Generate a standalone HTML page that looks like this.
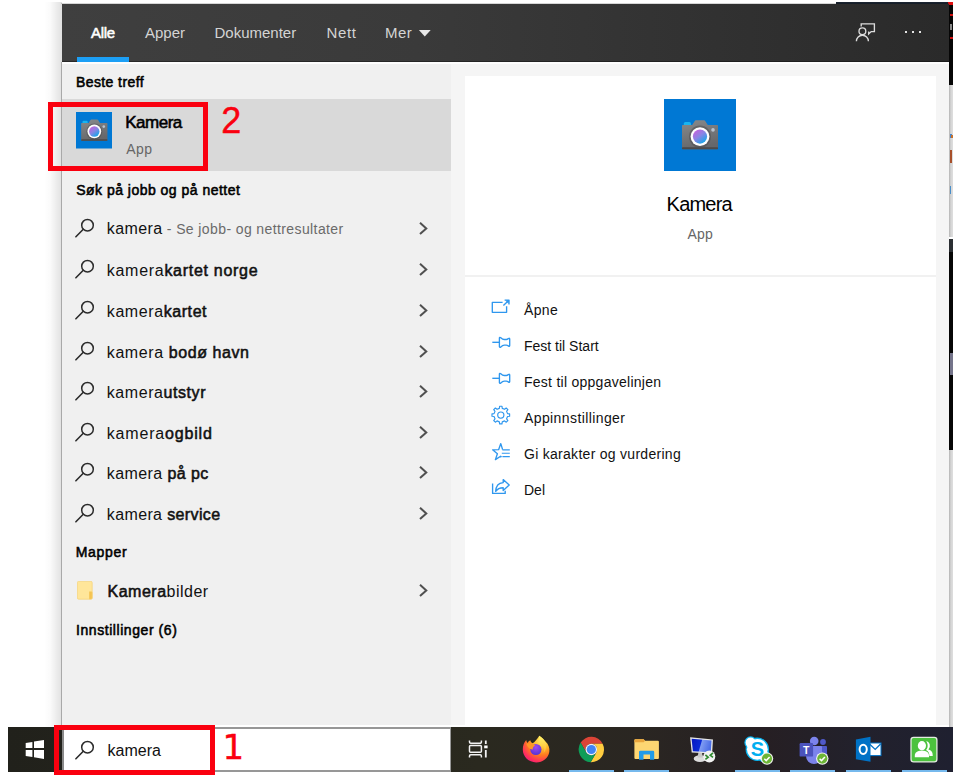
<!DOCTYPE html>
<html lang="nb"><head><meta charset="utf-8"><title>Søk – kamera</title>
<style>
html,body{margin:0;padding:0}
body{width:960px;height:780px;position:relative;overflow:hidden;background:#fff;font-family:"Liberation Sans",sans-serif}
div,svg{position:absolute}
.t{white-space:nowrap;margin:0;padding:0}
b{font-weight:400;-webkit-text-stroke:0.55px currentColor}
.g{color:#6a6a6a}
</style></head><body>
<div style="left:44px;top:2px;width:18px;height:725px;background:linear-gradient(to right,rgba(0,0,0,0),rgba(0,0,0,0.02) 35%,rgba(0,0,0,0.12))"></div>
<div style="left:836px;top:2px;width:117px;height:3px;background:#1b2430"></div>
<div style="left:949px;top:3px;width:4.3px;height:724px;background:linear-gradient(to right,#b4b4b4,#d6d6d6 50%,#dedede)"></div>
<div style="left:949px;top:3px;width:4.3px;height:82px;background:#060606"></div>
<div style="left:949px;top:237px;width:4.3px;height:2px;background:#fff"></div>
<div style="left:949px;top:239px;width:4.3px;height:13px;background:#2a2e32"></div>
<div style="left:949px;top:252px;width:4.3px;height:198px;background:#060606"></div>
<div style="left:949.6px;top:353px;width:3px;height:22px;background:#74748a"></div>
<div style="left:949.5px;top:134px;width:2px;height:4px;background:#4a86c8"></div>
<div style="left:950.6px;top:135px;width:2px;height:3px;background:#c8702a"></div>
<div style="left:949.8px;top:150px;width:2px;height:13px;background:#a8502a"></div>
<div style="left:949.5px;top:186px;width:1.6px;height:8px;background:#4a8ec8"></div>
<div style="left:950px;top:14px;width:3.3px;height:2.2px;background:#d01010"></div>
<div style="left:950px;top:37px;width:3.3px;height:2.2px;background:#d01010"></div>
<div style="left:949.6px;top:24px;width:2.4px;height:6px;background:#8a8a8a"></div>
<div style="left:948px;top:2px;width:5px;height:3px;background:#e01010"></div>
<div style="left:61px;top:2.6px;width:888px;height:1.4px;background:rgba(0,0,0,0.16)"></div>
<div style="left:62px;top:4px;width:887px;height:58px;background:linear-gradient(to right,#3f3f3f,#3a3a3a 40%,#2a2a2a)"></div>
<div style="left:62px;top:62px;width:389px;height:662.6px;background:#f0f0f0"></div>
<div style="left:61px;top:62px;width:1px;height:665px;background:#a9a9a9"></div>
<div style="left:451px;top:62px;width:498px;height:662.6px;background:#f5f5f5"></div>
<div style="left:464.5px;top:76.2px;width:471px;height:651px;background:#fff"></div>
<div style="left:62px;top:60.7px;width:887px;height:1.3px;background:rgba(0,0,0,0.35)"></div>
<div style="left:62px;top:62px;width:887px;height:1.5px;background:#fdfdfd"></div>
<div style="left:465px;top:275px;width:471px;height:2px;background:#f1f1f1"></div>
<div style="left:77px;top:57px;width:52px;height:5px;background:#1c9ff5"></div>
<div class="t" id="alle" style="left:91.00px;top:22.80px;font-size:15px;line-height:20px;color:#fff;font-weight:400;-webkit-text-stroke:0.55px currentColor;letter-spacing:-0.333px">Alle</div>
<div class="t" id="apper" style="left:145.00px;top:22.80px;font-size:15px;line-height:20px;color:#d4d4d4;font-weight:400;letter-spacing:0.000px">Apper</div>
<div class="t" id="dok" style="left:214.50px;top:22.80px;font-size:15px;line-height:20px;color:#d4d4d4;font-weight:400;letter-spacing:0.000px">Dokumenter</div>
<div class="t" id="nett" style="left:326.50px;top:22.80px;font-size:15px;line-height:20px;color:#d4d4d4;font-weight:400;letter-spacing:0.667px">Nett</div>
<div class="t" id="mer" style="left:385.00px;top:22.80px;font-size:15px;line-height:20px;color:#d4d4d4;font-weight:400;letter-spacing:0.500px">Mer</div>
<svg style="left:418px;top:28.6px" width="14" height="9" viewBox="0 0 14 9"><path d="M0.9 0.9h11.8L6.8 7.4z" fill="#e8e8e8"/></svg>
<svg style="left:853px;top:20px" width="26" height="24" viewBox="853 20 26 24" fill="none" stroke="#dcdcdc" stroke-width="1.35">
<path d="M861.2,26.6 V23.9 H874.4 V31.6 H871.2 L868.7,34 V31.6"/>
<circle cx="862.4" cy="31.3" r="3.4"/>
<path d="M856.4,41.2 a6,6 0 0 1 12,0"/>
</svg>
<div style="left:904.6px;top:31px;width:2.3px;height:2.3px;background:#e4e4e4"></div>
<div style="left:911.5px;top:31px;width:2.3px;height:2.3px;background:#e4e4e4"></div>
<div style="left:918.5px;top:31px;width:2.3px;height:2.3px;background:#e4e4e4"></div>

<div class="t" id="beste" style="left:76.00px;top:72.55px;font-size:14px;line-height:18px;color:#000;font-weight:400;-webkit-text-stroke:0.55px currentColor;letter-spacing:0.400px">Beste treff</div>
<div style="left:62px;top:99px;width:389px;height:72px;background:#d9d9d9"></div>
<svg style="left:75.5px;top:112.1px" width="36.5" height="36.5" viewBox="0 0 36.5 36.5"><rect width="36.5" height="36.5" fill="#0078d4"/><g transform="translate(18.3 18.3) scale(0.73)">
<defs><linearGradient id="cbb" x1="0" y1="0" x2="0.3" y2="1"><stop offset="0" stop-color="#888a8c"/><stop offset="1" stop-color="#66676a"/></linearGradient>
<linearGradient id="clb" x1="0.15" y1="0.1" x2="0.8" y2="0.95"><stop offset="0" stop-color="#c064dc"/><stop offset="0.45" stop-color="#8a84e4"/><stop offset="1" stop-color="#10a8ea"/></linearGradient></defs>
<rect x="-16.2" y="-13" width="7.2" height="5" rx="1.6" fill="#19b4f0"/>
<path d="M-18,-9.2 a0.9,0.9 0 0 1 0.9,-0.9 H-7.8 L-5.2,-14 a1.4,1.4 0 0 1 1.1,-0.7 H4.1 a1.4,1.4 0 0 1 1.1,0.7 L7.8,-10.1 H17.1 a0.9,0.9 0 0 1 0.9,0.9 V13.4 a0.8,0.8 0 0 1 -0.8,0.8 H-17.2 a0.8,0.8 0 0 1 -0.8,-0.8 Z" fill="url(#cbb)"/>
<rect x="-18" y="12.3" width="36" height="1.9" rx="0.6" fill="#4b4a4a"/>
<circle cx="0" cy="1.6" r="11" fill="#4e4f51" opacity="0.55"/>
<circle cx="0" cy="1.6" r="9.4" fill="#fdfdfd"/>
<circle cx="0" cy="1.6" r="7.1" fill="url(#clb)"/>
<circle cx="13" cy="-5.1" r="1.8" fill="#b9c3cf"/>
</g></svg>

<div class="t" id="kam1" style="left:125.25px;top:112.11px;font-size:17px;line-height:22px;color:#000;font-weight:400;-webkit-text-stroke:0.55px currentColor;letter-spacing:-0.500px">Kamera</div>
<div class="t" id="app1" style="left:126.25px;top:139.90px;font-size:14px;line-height:18px;color:#666;font-weight:400;letter-spacing:0.500px">App</div>
<div class="t" id="sok" style="left:76.25px;top:181.15px;font-size:14px;line-height:18px;color:#000;font-weight:400;-webkit-text-stroke:0.55px currentColor;letter-spacing:0.478px">Søk på jobb og på nettet</div>
<div class="t" id="r1" style="left:106.80px;top:218.36px;font-size:16px;line-height:21px;color:#111;font-weight:400;letter-spacing:0.394px">kamera<span class="g" style="font-size:14px"> - Se jobb- og nettresultater</span></div>
<svg style="left:74px;top:216.7px" width="22" height="22" viewBox="0 0 22 22"><circle cx="13.5" cy="8.2" r="5.8" fill="none" stroke="#2b2b2b" stroke-width="1.5"/><path d="M9.3 12.3L1.9 19.8" stroke="#2b2b2b" stroke-width="1.6" stroke-linecap="round"/></svg>
<svg style="left:419px;top:220.7px" width="10" height="15" viewBox="0 0 10 15"><path d="M1 1.7L7.3 7.4L1 13.1" fill="none" stroke="#505050" stroke-width="2"/></svg>
<div class="t" id="r2" style="left:106.80px;top:259.56px;font-size:16px;line-height:21px;color:#111;font-weight:400;letter-spacing:0.706px">kamera<b>kartet norge</b></div>
<svg style="left:74px;top:257.9px" width="22" height="22" viewBox="0 0 22 22"><circle cx="13.5" cy="8.2" r="5.8" fill="none" stroke="#2b2b2b" stroke-width="1.5"/><path d="M9.3 12.3L1.9 19.8" stroke="#2b2b2b" stroke-width="1.6" stroke-linecap="round"/></svg>
<svg style="left:419px;top:261.9px" width="10" height="15" viewBox="0 0 10 15"><path d="M1 1.7L7.3 7.4L1 13.1" fill="none" stroke="#505050" stroke-width="2"/></svg>
<div class="t" id="r3" style="left:106.80px;top:300.56px;font-size:16px;line-height:21px;color:#111;font-weight:400;letter-spacing:0.582px">kamera<b>kartet</b></div>
<svg style="left:74px;top:298.9px" width="22" height="22" viewBox="0 0 22 22"><circle cx="13.5" cy="8.2" r="5.8" fill="none" stroke="#2b2b2b" stroke-width="1.5"/><path d="M9.3 12.3L1.9 19.8" stroke="#2b2b2b" stroke-width="1.6" stroke-linecap="round"/></svg>
<svg style="left:419px;top:302.9px" width="10" height="15" viewBox="0 0 10 15"><path d="M1 1.7L7.3 7.4L1 13.1" fill="none" stroke="#505050" stroke-width="2"/></svg>
<div class="t" id="r4" style="left:106.80px;top:341.56px;font-size:16px;line-height:21px;color:#111;font-weight:400;letter-spacing:0.587px">kamera <b>bodø havn</b></div>
<svg style="left:74px;top:339.9px" width="22" height="22" viewBox="0 0 22 22"><circle cx="13.5" cy="8.2" r="5.8" fill="none" stroke="#2b2b2b" stroke-width="1.5"/><path d="M9.3 12.3L1.9 19.8" stroke="#2b2b2b" stroke-width="1.6" stroke-linecap="round"/></svg>
<svg style="left:419px;top:343.9px" width="10" height="15" viewBox="0 0 10 15"><path d="M1 1.7L7.3 7.4L1 13.1" fill="none" stroke="#505050" stroke-width="2"/></svg>
<div class="t" id="r5" style="left:106.80px;top:381.76px;font-size:16px;line-height:21px;color:#111;font-weight:400;letter-spacing:0.564px">kamera<b>utstyr</b></div>
<svg style="left:74px;top:380.1px" width="22" height="22" viewBox="0 0 22 22"><circle cx="13.5" cy="8.2" r="5.8" fill="none" stroke="#2b2b2b" stroke-width="1.5"/><path d="M9.3 12.3L1.9 19.8" stroke="#2b2b2b" stroke-width="1.6" stroke-linecap="round"/></svg>
<svg style="left:419px;top:384.1px" width="10" height="15" viewBox="0 0 10 15"><path d="M1 1.7L7.3 7.4L1 13.1" fill="none" stroke="#505050" stroke-width="2"/></svg>
<div class="t" id="r6" style="left:106.80px;top:422.66px;font-size:16px;line-height:21px;color:#111;font-weight:400;letter-spacing:0.818px">kamera<b>ogbild</b></div>
<svg style="left:74px;top:421.0px" width="22" height="22" viewBox="0 0 22 22"><circle cx="13.5" cy="8.2" r="5.8" fill="none" stroke="#2b2b2b" stroke-width="1.5"/><path d="M9.3 12.3L1.9 19.8" stroke="#2b2b2b" stroke-width="1.6" stroke-linecap="round"/></svg>
<svg style="left:419px;top:425.0px" width="10" height="15" viewBox="0 0 10 15"><path d="M1 1.7L7.3 7.4L1 13.1" fill="none" stroke="#505050" stroke-width="2"/></svg>
<div class="t" id="r7" style="left:106.80px;top:463.06px;font-size:16px;line-height:21px;color:#111;font-weight:400;letter-spacing:0.418px">kamera <b>på pc</b></div>
<svg style="left:74px;top:461.4px" width="22" height="22" viewBox="0 0 22 22"><circle cx="13.5" cy="8.2" r="5.8" fill="none" stroke="#2b2b2b" stroke-width="1.5"/><path d="M9.3 12.3L1.9 19.8" stroke="#2b2b2b" stroke-width="1.6" stroke-linecap="round"/></svg>
<svg style="left:419px;top:465.4px" width="10" height="15" viewBox="0 0 10 15"><path d="M1 1.7L7.3 7.4L1 13.1" fill="none" stroke="#505050" stroke-width="2"/></svg>
<div class="t" id="r8" style="left:106.80px;top:503.86px;font-size:16px;line-height:21px;color:#111;font-weight:400;letter-spacing:0.369px">kamera <b>service</b></div>
<svg style="left:74px;top:502.2px" width="22" height="22" viewBox="0 0 22 22"><circle cx="13.5" cy="8.2" r="5.8" fill="none" stroke="#2b2b2b" stroke-width="1.5"/><path d="M9.3 12.3L1.9 19.8" stroke="#2b2b2b" stroke-width="1.6" stroke-linecap="round"/></svg>
<svg style="left:419px;top:506.2px" width="10" height="15" viewBox="0 0 10 15"><path d="M1 1.7L7.3 7.4L1 13.1" fill="none" stroke="#505050" stroke-width="2"/></svg>
<div class="t" id="mapper" style="left:75.75px;top:543.15px;font-size:14px;line-height:18px;color:#000;font-weight:400;-webkit-text-stroke:0.55px currentColor;letter-spacing:0.700px">Mapper</div>
<svg style="left:77px;top:581px" width="17" height="19" viewBox="0 0 17 19">
<path d="M1.6,0.4 H14 a1.2,1.2 0 0 1 1.2,1.2 V17 a1.2,1.2 0 0 1 -1.2,1.2 H1.6 a1.2,1.2 0 0 1 -1.2,-1.2 V1.6 a1.2,1.2 0 0 1 1.2,-1.2 Z" fill="#ffe69a"/>
<path d="M12.2,10.6 h2.2 a1,1 0 0 1 1,1 V17 a1.2,1.2 0 0 1 -1.2,1.2 h-2 Z" fill="#f5c451"/>
<path d="M1.6,0.4 H14 a1.2,1.2 0 0 1 1.2,1.2 V17 a1.2,1.2 0 0 1 -1.2,1.2 H1.6 a1.2,1.2 0 0 1 -1.2,-1.2 V1.6 a1.2,1.2 0 0 1 1.2,-1.2 Z" fill="none" stroke="#f7d375" stroke-width="0.7"/>
</svg>

<div class="t" id="kbild" style="left:107.50px;top:580.96px;font-size:16px;line-height:21px;color:#111;font-weight:400;letter-spacing:0.500px"><b>Kamera</b>bilder</div>
<svg style="left:419px;top:582.6px" width="10" height="15" viewBox="0 0 10 15"><path d="M1 1.7L7.3 7.4L1 13.1" fill="none" stroke="#505050" stroke-width="2"/></svg>
<div class="t" id="innst" style="left:76.00px;top:620.65px;font-size:14px;line-height:18px;color:#000;font-weight:400;-webkit-text-stroke:0.55px currentColor;letter-spacing:0.562px">Innstillinger (6)</div>
<svg style="left:664px;top:99px" width="72" height="72" viewBox="0 0 72 72"><rect width="72" height="72" fill="#0078d4"/><g transform="translate(36 36) scale(1)">
<defs><linearGradient id="cba" x1="0" y1="0" x2="0.3" y2="1"><stop offset="0" stop-color="#888a8c"/><stop offset="1" stop-color="#66676a"/></linearGradient>
<linearGradient id="cla" x1="0.15" y1="0.1" x2="0.8" y2="0.95"><stop offset="0" stop-color="#c064dc"/><stop offset="0.45" stop-color="#8a84e4"/><stop offset="1" stop-color="#10a8ea"/></linearGradient></defs>
<rect x="-16.2" y="-13" width="7.2" height="5" rx="1.6" fill="#19b4f0"/>
<path d="M-18,-9.2 a0.9,0.9 0 0 1 0.9,-0.9 H-7.8 L-5.2,-14 a1.4,1.4 0 0 1 1.1,-0.7 H4.1 a1.4,1.4 0 0 1 1.1,0.7 L7.8,-10.1 H17.1 a0.9,0.9 0 0 1 0.9,0.9 V13.4 a0.8,0.8 0 0 1 -0.8,0.8 H-17.2 a0.8,0.8 0 0 1 -0.8,-0.8 Z" fill="url(#cba)"/>
<rect x="-18" y="12.3" width="36" height="1.9" rx="0.6" fill="#4b4a4a"/>
<circle cx="0" cy="1.6" r="11" fill="#4e4f51" opacity="0.55"/>
<circle cx="0" cy="1.6" r="9.4" fill="#fdfdfd"/>
<circle cx="0" cy="1.6" r="7.1" fill="url(#cla)"/>
<circle cx="13" cy="-5.1" r="1.8" fill="#b9c3cf"/>
</g></svg>

<div class="t" id="kam2" style="left:666.60px;top:190.67px;font-size:20px;line-height:26px;color:#000;font-weight:400;letter-spacing:-0.800px">Kamera</div>
<div class="t" id="app2" style="left:687.40px;top:225.25px;font-size:14px;line-height:18px;color:#666;font-weight:400;letter-spacing:0.200px">App</div>
<div class="t" id="a1" style="left:524.00px;top:300.65px;font-size:14px;line-height:18px;color:#111;font-weight:400;letter-spacing:0.333px">Åpne</div>
<div class="t" id="a2" style="left:524.00px;top:336.65px;font-size:14px;line-height:18px;color:#111;font-weight:400;letter-spacing:0.000px">Fest til Start</div>
<div class="t" id="a3" style="left:524.00px;top:372.65px;font-size:14px;line-height:18px;color:#111;font-weight:400;letter-spacing:0.262px">Fest til oppgavelinjen</div>
<div class="t" id="a4" style="left:524.00px;top:408.65px;font-size:14px;line-height:18px;color:#111;font-weight:400;letter-spacing:0.400px">Appinnstillinger</div>
<div class="t" id="a5" style="left:524.00px;top:444.65px;font-size:14px;line-height:18px;color:#111;font-weight:400;letter-spacing:0.283px">Gi karakter og vurdering</div>
<div class="t" id="a6" style="left:524.00px;top:480.65px;font-size:14px;line-height:18px;color:#111;font-weight:400;letter-spacing:0.000px">Del</div>
<svg style="left:488px;top:296px" width="26" height="204" viewBox="488 296 26 204" fill="none" stroke="#2f97ee" stroke-width="1.35" stroke-linejoin="round">
<path d="M502.6,302.4 H492.3 V312.3 H506.6 V306.2"/>
<path d="M503.4,305.6 L508.9,300.2 M504.6,300.1 H509 V304.5" stroke-linecap="butt"/>
<path d="M508.9,300.1 l-3.6,0.3 l3.3,3.3 z" fill="#2f97ee" stroke="none"/>
<g id="pin1">
<path d="M492.3,342.3 H499.3"/>
<path d="M499.4,337.9 C499.4,337.2 500.3,337.2 500.8,337.7 C501.8,338.7 502.8,339.5 504.3,339.5 H506.3 C507.3,339.5 508,338.9 508.6,338.5 C509.2,338.1 509.7,338.3 509.7,339 V345.6 C509.7,346.3 509.2,346.5 508.6,346.1 C508,345.7 507.3,345.1 506.3,345.1 H504.3 C502.8,345.1 501.8,345.9 500.8,346.9 C500.3,347.4 499.4,347.4 499.4,346.7 Z"/>
</g>
<g transform="translate(0 36)">
<path d="M492.3,342.3 H499.3"/>
<path d="M499.4,337.9 C499.4,337.2 500.3,337.2 500.8,337.7 C501.8,338.7 502.8,339.5 504.3,339.5 H506.3 C507.3,339.5 508,338.9 508.6,338.5 C509.2,338.1 509.7,338.3 509.7,339 V345.6 C509.7,346.3 509.2,346.5 508.6,346.1 C508,345.7 507.3,345.1 506.3,345.1 H504.3 C502.8,345.1 501.8,345.9 500.8,346.9 C500.3,347.4 499.4,347.4 499.4,346.7 Z"/>
</g>
<path d="M507.55,413.65 L509.62,413.92 L509.62,416.28 L507.55,416.55 L506.60,418.84 L507.88,420.50 L506.20,422.18 L504.54,420.90 L502.25,421.85 L501.98,423.92 L499.62,423.92 L499.35,421.85 L497.06,420.90 L495.40,422.18 L493.72,420.50 L495.00,418.84 L494.05,416.55 L491.98,416.28 L491.98,413.92 L494.05,413.65 L495.00,411.36 L493.72,409.70 L495.40,408.02 L497.06,409.30 L499.35,408.35 L499.62,406.28 L501.98,406.28 L502.25,408.35 L504.54,409.30 L506.20,408.02 L507.88,409.70 L506.60,411.36Z" stroke-width="1.15"/>
<circle cx="500.8" cy="415.1" r="3.1" stroke-width="1.15"/>
<path d="M502.6,449.6 L500.8,443.6 L498.6,449.7 L492.6,449.8 L497.4,453.7 L495.4,459.6 L500.6,456.2 L501.6,456.9"/>
<path d="M502.4,449.8 H509.8 M501.8,453.2 H509.8 M502.4,456.6 H509.8" stroke-width="1.15"/>
<path d="M492.6,483.6 V493.4 H505.2 V490.8"/>
<path d="M503.2,479.6 L509.2,485.1 L503.2,490.6 V487.7 C499.6,487.7 497.3,488.9 495.7,491.4 C495.9,486.3 498.7,482.9 503.2,482.6 Z"/>
</svg>

<div style="left:8px;top:727px;width:945px;height:45px;background:linear-gradient(to right,#21211b,#2a291f 50%,#2a2622 67%,#261f23 80%,#22212c 90%,#1f2030)"></div>
<div style="left:62px;top:726.6px;width:389px;height:45.6px;background:#fff;box-sizing:border-box;border-top:2.2px solid #979797;border-bottom:2.2px solid #979797;border-right:1.8px solid #979797;border-left:2px solid #8a8a8a"></div>
<svg style="left:74px;top:738.5px" width="22" height="22" viewBox="0 0 22 22"><circle cx="13.5" cy="8.2" r="5.8" fill="none" stroke="#2b2b2b" stroke-width="1.5"/><path d="M9.3 12.3L1.9 19.8" stroke="#2b2b2b" stroke-width="1.6" stroke-linecap="round"/></svg>
<div class="t" id="q" style="left:107.50px;top:740.21px;font-size:16px;line-height:21px;color:#111;font-weight:400;letter-spacing:0.000px">kamera</div>
<svg style="left:24px;top:738px" width="22" height="23" viewBox="24 738 22 23"><g fill="#fff">
<path d="M25.7,743 L32.4,741.9 V748.1 H25.7Z"/><path d="M34,741.4 L44,740 V748.1 H34Z"/>
<path d="M25.7,750 H32.4 V757 L25.7,756Z"/><path d="M34,750 H44 V759 L34,757.3Z"/></g></svg>
<svg style="left:466px;top:738px" width="24" height="22" viewBox="466 738 24 22" fill="none" stroke="#f2f2f2" stroke-width="1.5">
<rect x="469.5" y="745.5" width="11.9" height="6.7" rx="1"/>
<path d="M469.5,740.4 V742 a1.2,1.2 0 0 0 1.2,1.2 H480.2 a1.2,1.2 0 0 0 1.2,-1.2 V740.4"/>
<path d="M469.5,757.6 V756 a1.2,1.2 0 0 1 1.2,-1.2 H480.2 a1.2,1.2 0 0 1 1.2,1.2 V757.6"/>
<path d="M485.8,740.4 V744 M485.8,750 V757.6" stroke-width="1.8"/>
<rect x="484.2" y="745.5" width="3.4" height="2.8" fill="#fff" stroke="none"/>
</svg>
<div style="left:568.6px;top:769.8px;width:45.2px;height:2.6px;background:#76b9ed"></div>
<div style="left:624.2px;top:769.8px;width:45.2px;height:2.6px;background:#76b9ed"></div>
<div style="left:735.2px;top:769.8px;width:45.2px;height:2.6px;background:#76b9ed"></div>
<div style="left:790.3px;top:769.8px;width:45.2px;height:2.6px;background:#76b9ed"></div>
<div style="left:846px;top:769.8px;width:45.2px;height:2.6px;background:#76b9ed"></div>
<div style="left:901.5px;top:769.8px;width:45.2px;height:2.6px;background:#76b9ed"></div>
<svg style="left:521px;top:734px" width="30" height="30" viewBox="521 734 30 30">
<defs><radialGradient id="ff1" cx="0.72" cy="0.18" r="1.0"><stop offset="0" stop-color="#fff36b"/><stop offset="0.3" stop-color="#ffbd2e"/><stop offset="0.55" stop-color="#ff7a1f"/><stop offset="0.8" stop-color="#ff2d5e"/><stop offset="1" stop-color="#e31587"/></radialGradient>
<radialGradient id="ff2" cx="0.5" cy="0.3" r="0.8"><stop offset="0" stop-color="#a24bf0"/><stop offset="1" stop-color="#4a2fd0"/></radialGradient>
<linearGradient id="ff3" x1="0" y1="0" x2="0" y2="1"><stop offset="0" stop-color="#fff56b"/><stop offset="1" stop-color="#ffb62e"/></linearGradient></defs>
<path d="M539.3,735.7 C542,737.6 544,739.3 545.5,741.5 C548.6,744.5 549.9,748 549.3,752 C548.3,758.2 542.8,762.4 536.2,762.4 C528.8,762.4 522.8,757 522.8,749.6 C522.8,745.6 524,742.2 526.2,739.9 C526.4,741.3 526.9,742.3 527.6,743 C528.3,741.6 529.2,740.8 530.3,740.3 C530.6,741.7 531.4,742.6 532.6,743.2 C534.8,742.2 536.6,739.6 539.3,735.7 Z" fill="url(#ff1)"/>
<circle cx="535.9" cy="749.5" r="5.6" fill="url(#ff2)"/>
<path d="M526.3,743.8 C529,743.2 532.5,743.6 535.2,745.4 C533.4,746.2 532.4,747.6 532.8,749.4 C529.8,749.6 527.2,747.4 526.3,743.8 Z" fill="#ff9726"/>
<path d="M539.3,735.7 C542.6,738 545.3,741 546,745 C546.5,748 545.6,751 543.6,753 C545,749.6 544,745.6 540.8,743.4 C539.3,742.3 538.2,740.2 539.3,735.7 Z" fill="url(#ff3)"/>
</svg>
<svg style="left:577px;top:735px" width="29" height="29" viewBox="577 735 29 29"><path d="M586.28,752.40 L580.63,742.62 A12.7,12.7 0 0 1 602.60,743.70 L591.30,743.70 A5.8,5.8 0 0 0 586.28,752.40Z" fill="#db4437"/><path d="M591.30,743.70 L602.60,743.70 A12.7,12.7 0 0 1 590.67,762.18 L596.32,752.40 A5.8,5.8 0 0 0 591.30,743.70Z" fill="#ffcd40"/><path d="M596.32,752.40 L590.67,762.18 A12.7,12.7 0 0 1 580.63,742.62 L586.28,752.40 A5.8,5.8 0 0 0 596.32,752.40Z" fill="#0f9d58"/><circle cx="591.3" cy="749.5" r="5.8" fill="#f4f4f4"/><circle cx="591.3" cy="749.5" r="4.6" fill="#4285f4"/></svg>
<svg style="left:633px;top:738px" width="28" height="23" viewBox="633 738 28 23">
<path d="M634.4,740.2 a1,1 0 0 1 1,-1 H643.6 l1.4,1.6 H657.9 a1,1 0 0 1 1,1 V758 a1,1 0 0 1 -1,1 H635.4 a1,1 0 0 1 -1,-1 Z" fill="#fdd672"/>
<path d="M634.4,740.2 a1,1 0 0 1 1,-1 H643.6 l1.4,1.6 l-1.3,1.4 H634.4 Z" fill="#e9a53c"/>
<path d="M639,752 a1.2,1.2 0 0 1 1.2,-1.2 H653 a1.2,1.2 0 0 1 1.2,1.2 V759.7 H650 V754.5 H643.5 V759.7 H639 Z" fill="#209be9"/>
</svg>
<svg style="left:688px;top:735px" width="30" height="30" viewBox="688 735 30 30">
<defs><linearGradient id="rd1" x1="0" y1="0" x2="1" y2="0.2"><stop offset="0" stop-color="#0618c0"/><stop offset="0.5" stop-color="#0a2ad6"/><stop offset="0.55" stop-color="#7f9cf2"/><stop offset="1" stop-color="#4d6fe6"/></linearGradient></defs>
<ellipse cx="700" cy="758.7" rx="6.3" ry="3.4" fill="#dcdcdc"/>
<path d="M698.4,752.5 h3.6 l0.8,5 h-5.2 z" fill="#c8c8c8"/>
<path d="M690.1,737.2 L713,739.4 L712.1,753.6 L691.7,752.5 Z" fill="#e6e6e6"/>
<path d="M691.6,738.7 L711.5,740.6 L710.8,752.2 L692.9,751.2 Z" fill="url(#rd1)"/>
<circle cx="709.3" cy="756.6" r="6" fill="#f2f2f2"/>
<path d="M705.4,755 l2.8,2.2 l-2.8,2.2 M713,753 l-2.8,2.2 l2.8,2.2" fill="none" stroke="#2f8a2f" stroke-width="1.6"/>
</svg>
<svg style="left:743px;top:735px" width="32" height="31" viewBox="743 735 32 31">
<g fill="#fff" stroke="#0ab6f2" stroke-width="2.6"><circle cx="757.3" cy="749.3" r="10.4"/><circle cx="750.6" cy="742.6" r="5"/><circle cx="764" cy="756" r="5"/></g>
<g fill="#fff"><circle cx="757.3" cy="749.3" r="10.4"/><circle cx="750.6" cy="742.6" r="5"/><circle cx="764" cy="756" r="5"/></g>
<text x="757.4" y="756.4" font-family="Liberation Sans, sans-serif" font-weight="700" font-size="20" text-anchor="middle" fill="#00aff0">S</text>
<circle cx="767" cy="758.6" r="6.2" fill="#f4f4f4"/><circle cx="767" cy="758.6" r="5.1" fill="#6cb536"/><path d="M764.3,758.7 l1.9,1.9 l3.4,-3.7" fill="none" stroke="#fff" stroke-width="1.5"/>
</svg>
<svg style="left:798px;top:735px" width="32" height="31" viewBox="798 735 32 31">
<circle cx="823" cy="742" r="2.9" fill="#5059c9"/>
<path d="M818,746 H826 a1,1 0 0 1 1,1 V755 a4.6,4.6 0 0 1 -9,0 Z" fill="#5059c9"/>
<circle cx="814.2" cy="741" r="4.3" fill="#7b83eb"/>
<path d="M805.5,746 H821 a1,1 0 0 1 1,1 V756 a8,8 0 0 1 -16,0 V746 Z" fill="#7b83eb"/>
<rect x="799.6" y="743" width="13.5" height="13.6" rx="1.2" fill="#4b53bc"/>
<text x="806.3" y="753.6" font-family="Liberation Sans, sans-serif" font-weight="700" font-size="10.5" text-anchor="middle" fill="#fff">T</text>
<circle cx="822.3" cy="758.6" r="6.2" fill="#f4f4f4"/><circle cx="822.3" cy="758.6" r="5.1" fill="#6cb536"/><path d="M819.5999999999999,758.7 l1.9,1.9 l3.4,-3.7" fill="none" stroke="#fff" stroke-width="1.5"/>
</svg>
<svg style="left:854px;top:735px" width="30" height="29" viewBox="854 735 30 29">
<rect x="869" y="743" width="12" height="12.6" fill="#fff" stroke="#0072c6" stroke-width="1"/>
<path d="M869.5,744 L875.2,749.4 L880.6,744" fill="none" stroke="#0072c6" stroke-width="1.3"/>
<path d="M855.9,739.4 L870.5,736.8 V761.8 L855.9,759.2 Z" fill="#0072c6"/>
<ellipse cx="863.2" cy="749.3" rx="3.6" ry="4.6" fill="none" stroke="#fff" stroke-width="2"/>
</svg>
<svg style="left:909px;top:735px" width="30" height="29" viewBox="909 735 30 29">
<rect x="911" y="737.4" width="25.9" height="24.5" rx="2.6" fill="#4cc23e" stroke="#e3ece0" stroke-width="1.3"/>
<g fill="#fff">
<path d="M926.2,741.2 a4,4.6 0 0 1 2.2,8.2 c3,0.6 4.3,2.6 4.3,5.6 v1 h-3.3 c0,-3 -1,-5 -3.4,-6 c1.8,-1.6 2.6,-5.6 0.2,-8.8 z"/>
<ellipse cx="921.9" cy="745.7" rx="4.1" ry="4.7"/>
<path d="M914.8,757.3 v-1.6 c0,-3 2.4,-4.6 5,-4.9 h4.2 c2.6,0.3 5,1.9 5,4.9 v1.6 z"/>
</g>
</svg>

<div style="left:47.5px;top:102px;width:160.5px;height:68.7px;box-sizing:border-box;border:5px solid #fa000f"></div>
<div style="left:54px;top:725.4px;width:161px;height:50px;box-sizing:border-box;border:5px solid #fa000f"></div>
<div class="t" id="n2" style="left:221.20px;top:97.03px;font-size:36px;line-height:47px;color:#fa000f;-webkit-text-stroke:0.45px #fa000f;font-weight:400;letter-spacing:0.000px">2</div>
<div class="t" id="n1" style="font-family:'DejaVu Sans',sans-serif;left:222.60px;top:725.02px;font-size:34px;line-height:44px;color:#fa000f;-webkit-text-stroke:0.4px #fa000f;font-weight:400;letter-spacing:0.000px">1</div>
</body></html>
